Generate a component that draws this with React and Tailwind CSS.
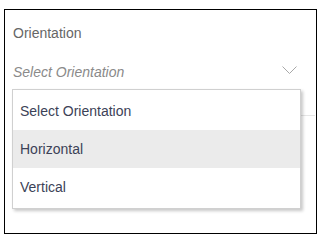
import React from 'react';

const options = ['Select Orientation', 'Horizontal', 'Vertical'];

const Chevron = () => (
  <svg width="15" height="9" viewBox="0 0 15 9" className="mt-[4px]">
    <polyline points="0.5,0.5 7.5,7.5 14.5,0.5" fill="none" stroke="#a8a8a8" strokeWidth="1" />
  </svg>
);

const OrientationSelect = () => {
  const active = 'Horizontal';
  return (
    <div className="relative w-[313px] h-[225px] border border-black bg-white px-2">
      <div className="mt-[13px] h-5 leading-5 text-[14px] text-[#666]">Orientation</div>

      <div className="mt-[19px] mr-[-7px] h-[54px] border-b border-[#e6e6e6]">
        <div className="flex items-start justify-between pr-[18px]">
          <span className="h-5 leading-5 text-[14px] italic text-[#8a8a8a]">Select Orientation</span>
          <Chevron />
        </div>
      </div>

      <div className="absolute left-[7px] top-[79px] w-[289px] bg-white border border-[#d0d0d0] py-[2px] shadow-[2px_2px_3px_rgba(0,0,0,0.22)]">
        {options.map((opt) => (
          <div
            key={opt}
            className={`h-[38px] flex items-center px-[7px] text-[14px] text-[#3c4257] ${
              opt === active ? 'bg-[#ebebeb]' : 'bg-white'
            }`}
          >
            {opt}
          </div>
        ))}
      </div>
    </div>
  );
};

export default function App() {
  return (
    <div
      className="w-[322px] h-[240px] bg-white pt-[9px] pl-[4px]"
      style={{ fontFamily: '"Liberation Sans", Arial, sans-serif' }}
    >
      <OrientationSelect />
    </div>
  );
}
